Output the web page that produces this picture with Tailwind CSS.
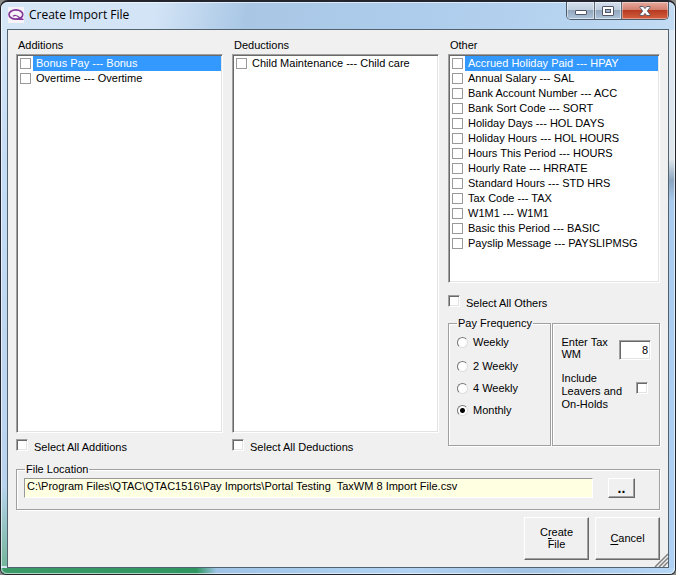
<!DOCTYPE html>
<html lang="en">
<head>
    <meta charset="UTF-8">
    <meta name="viewport" content="width=device-width, initial-scale=1.0">
    <title>Create Import File</title>
    <script src="https://cdn.jsdelivr.net/npm/@tailwindcss/browser@4"></script>
</head>
<body class="bg-[#8a8a86] font-['Liberation_Sans',Arial,sans-serif] text-[11px] leading-[14px] text-black">

    <div class="relative flex flex-col min-h-screen px-1.5 pb-1.5 border border-t-2 border-[#23252e] rounded-t-lg rounded-b-md bg-[linear-gradient(100deg,#d5e6f7_0%,#d3e4f6_20%,#a9c7e5_32%,#aecdec_55%,#b7d4f0_75%,#cfe3f7_100%)]">
        <!-- window edges -->
        <div class="absolute inset-x-0 bottom-0 h-1.5 rounded-b-md bg-[linear-gradient(90deg,#3b9a68_0%,#2f9560_29%,#9fc4e6_32%,#b1d2f2_60%,#a3c3e2_78%,#b5d6f5_100%)]"></div>
        <div class="absolute top-7 bottom-2 left-0 w-1.5 bg-[linear-gradient(180deg,#d5e6f7_0%,#c4dcf5_25%,#b9d3ee_85%,#74b59b_100%)]"></div>
        <div class="absolute top-7 bottom-1.5 right-0 w-1.5 bg-[linear-gradient(180deg,#dce8f4_0%,#dfe6ec_24%,#8ba5bf_28%,#a9cbee_32%,#aed0f2_100%)]"></div>
        <div class="absolute inset-0 rounded-t-md rounded-b-md border border-white/60 pointer-events-none"></div>

        <header class="flex items-start h-[27px]">
            <svg class="w-4 h-4 mt-[5px] ml-px" viewBox="0 0 16 16" aria-hidden="true">
                <rect width="16" height="16" fill="#f8f4fa"/>
                <ellipse cx="7.900" cy="7.500" rx="6.900" ry="4.700" fill="none" stroke="#85399a" stroke-width="1.700"/>
                <path d="M5 9.300c1.500-1.200 4-1 5.200.4 1 1.300 2.400 2.600 5.300 2.700H7" fill="none" stroke="#85399a" stroke-width="1.300"/>
            </svg>
            <h1 class="flex-1 ml-[5px] mt-[4px] font-['Open_Sans','Noto_Sans',sans-serif] text-[12px] leading-[18px]">Create Import File</h1>
            <div class="relative flex h-[18px] border border-t-0 border-[#4d5a6b] rounded-b-[5px] overflow-hidden divide-x divide-[#5b6878]">
                <button type="button" aria-label="Minimize" class="w-7 flex justify-center items-center shadow-[inset_0_0_0_1px_#ffffff80] bg-[linear-gradient(180deg,#d3dfec_0%,#c1cfde_45%,#93a7bd_50%,#adc4da_100%)]">
                    <svg class="w-3 h-3" viewBox="0 0 12 12"><rect x=".5" y="5.500" width="11" height="4" rx=".5" fill="#fff" stroke="#535666"/></svg>
                </button>
                <button type="button" aria-label="Maximize" class="w-[27px] flex justify-center items-center shadow-[inset_0_0_0_1px_#ffffff80] bg-[linear-gradient(180deg,#d3dfec_0%,#c1cfde_45%,#93a7bd_50%,#adc4da_100%)]">
                    <svg class="w-3 h-3" viewBox="0 0 12 12"><rect x=".5" y="1.500" width="11" height="9" rx=".5" fill="#fff" stroke="#535666"/><rect x="3.500" y="4.500" width="5" height="3" fill="#9db4ca" stroke="#535666"/></svg>
                </button>
                <button type="button" aria-label="Close" class="w-[46px] flex justify-center items-center shadow-[inset_0_0_0_1px_#ffffff60] bg-[linear-gradient(180deg,#e6aa9d_0%,#d4806f_45%,#b83a22_50%,#d5603f_100%)]">
                    <svg class="w-3 h-3" viewBox="0 0 12 12"><path d="M1 1.500h3.400L6 3.600l1.600-2.100H11v1L8.300 6l2.700 3.500v1H7.600L6 8.400l-1.600 2.100H1v-1L3.700 6 1 2.500z" fill="#fff" stroke="#535666" stroke-width=".9"/></svg>
                </button>
            </div>
        </header>

        <form class="relative flex-1 flex flex-col p-2 pb-[7px] bg-[#f0f0f0] border border-[#53626f]">
            <div class="flex-1 grid grid-cols-[207fr_207fr_212fr] gap-x-[9px]">
                <section class="flex flex-col">
                    <h2 class="mb-0.5 pl-0.5">Additions</h2>
                    <ul class="flex-1 p-px bg-white border border-t-[#a0a0a0] border-l-[#a0a0a0] border-r-white border-b-white shadow-[inset_1px_1px_0_#696969,inset_-1px_-1px_0_#e3e3e3]">
                        <li><label class="flex items-center h-[15px] pl-0.5 gap-0.5"><input type="checkbox" class="appearance-none w-[11px] h-[11px] border border-[#999] bg-white checked:bg-[#999]"><span class="flex-1 pl-[3px] leading-[15px] bg-[#3399ff] text-white">Bonus Pay --- Bonus</span></label></li>
                        <li><label class="flex items-center h-[15px] pl-0.5 gap-0.5"><input type="checkbox" class="appearance-none w-[11px] h-[11px] border border-[#999] bg-white checked:bg-[#999]"><span class="flex-1 pl-[3px] leading-[15px]">Overtime --- Overtime</span></label></li>
                    </ul>
                    <label class="flex items-start mt-1.5 gap-1.5"><input type="checkbox" class="appearance-none w-3 h-3 border border-t-[#a0a0a0] border-l-[#a0a0a0] border-r-white border-b-white shadow-[inset_1px_1px_0_#696969,inset_-1px_-1px_0_#e3e3e3] bg-white checked:bg-[#777]"><span class="mt-px">Select All Additions</span></label>
                </section>

                <section class="flex flex-col">
                    <h2 class="mb-0.5 pl-0.5">Deductions</h2>
                    <ul class="flex-1 p-px bg-white border border-t-[#a0a0a0] border-l-[#a0a0a0] border-r-white border-b-white shadow-[inset_1px_1px_0_#696969,inset_-1px_-1px_0_#e3e3e3]">
                        <li><label class="flex items-center h-[15px] pl-0.5 gap-0.5"><input type="checkbox" class="appearance-none w-[11px] h-[11px] border border-[#999] bg-white checked:bg-[#999]"><span class="flex-1 pl-[3px] leading-[15px]">Child Maintenance --- Child care</span></label></li>
                    </ul>
                    <label class="flex items-start mt-1.5 gap-1.5"><input type="checkbox" class="appearance-none w-3 h-3 border border-t-[#a0a0a0] border-l-[#a0a0a0] border-r-white border-b-white shadow-[inset_1px_1px_0_#696969,inset_-1px_-1px_0_#e3e3e3] bg-white checked:bg-[#777]"><span class="mt-px">Select All Deductions</span></label>
                </section>

                <section class="flex flex-col">
                    <h2 class="mb-0.5 pl-0.5">Other</h2>
                    <ul class="flex-1 p-px bg-white border border-t-[#a0a0a0] border-l-[#a0a0a0] border-r-white border-b-white shadow-[inset_1px_1px_0_#696969,inset_-1px_-1px_0_#e3e3e3]">
                        <li><label class="flex items-center h-[15px] pl-0.5 gap-0.5"><input type="checkbox" class="appearance-none w-[11px] h-[11px] border border-[#999] bg-white checked:bg-[#999]"><span class="flex-1 pl-[3px] leading-[15px] bg-[#3399ff] text-white">Accrued Holiday Paid --- HPAY</span></label></li>
                        <li><label class="flex items-center h-[15px] pl-0.5 gap-0.5"><input type="checkbox" class="appearance-none w-[11px] h-[11px] border border-[#999] bg-white checked:bg-[#999]"><span class="flex-1 pl-[3px] leading-[15px]">Annual Salary --- SAL</span></label></li>
                        <li><label class="flex items-center h-[15px] pl-0.5 gap-0.5"><input type="checkbox" class="appearance-none w-[11px] h-[11px] border border-[#999] bg-white checked:bg-[#999]"><span class="flex-1 pl-[3px] leading-[15px]">Bank Account Number --- ACC</span></label></li>
                        <li><label class="flex items-center h-[15px] pl-0.5 gap-0.5"><input type="checkbox" class="appearance-none w-[11px] h-[11px] border border-[#999] bg-white checked:bg-[#999]"><span class="flex-1 pl-[3px] leading-[15px]">Bank Sort Code --- SORT</span></label></li>
                        <li><label class="flex items-center h-[15px] pl-0.5 gap-0.5"><input type="checkbox" class="appearance-none w-[11px] h-[11px] border border-[#999] bg-white checked:bg-[#999]"><span class="flex-1 pl-[3px] leading-[15px]">Holiday Days --- HOL DAYS</span></label></li>
                        <li><label class="flex items-center h-[15px] pl-0.5 gap-0.5"><input type="checkbox" class="appearance-none w-[11px] h-[11px] border border-[#999] bg-white checked:bg-[#999]"><span class="flex-1 pl-[3px] leading-[15px]">Holiday Hours --- HOL HOURS</span></label></li>
                        <li><label class="flex items-center h-[15px] pl-0.5 gap-0.5"><input type="checkbox" class="appearance-none w-[11px] h-[11px] border border-[#999] bg-white checked:bg-[#999]"><span class="flex-1 pl-[3px] leading-[15px]">Hours This Period --- HOURS</span></label></li>
                        <li><label class="flex items-center h-[15px] pl-0.5 gap-0.5"><input type="checkbox" class="appearance-none w-[11px] h-[11px] border border-[#999] bg-white checked:bg-[#999]"><span class="flex-1 pl-[3px] leading-[15px]">Hourly Rate --- HRRATE</span></label></li>
                        <li><label class="flex items-center h-[15px] pl-0.5 gap-0.5"><input type="checkbox" class="appearance-none w-[11px] h-[11px] border border-[#999] bg-white checked:bg-[#999]"><span class="flex-1 pl-[3px] leading-[15px]">Standard Hours --- STD HRS</span></label></li>
                        <li><label class="flex items-center h-[15px] pl-0.5 gap-0.5"><input type="checkbox" class="appearance-none w-[11px] h-[11px] border border-[#999] bg-white checked:bg-[#999]"><span class="flex-1 pl-[3px] leading-[15px]">Tax Code --- TAX</span></label></li>
                        <li><label class="flex items-center h-[15px] pl-0.5 gap-0.5"><input type="checkbox" class="appearance-none w-[11px] h-[11px] border border-[#999] bg-white checked:bg-[#999]"><span class="flex-1 pl-[3px] leading-[15px]">W1M1 --- W1M1</span></label></li>
                        <li><label class="flex items-center h-[15px] pl-0.5 gap-0.5"><input type="checkbox" class="appearance-none w-[11px] h-[11px] border border-[#999] bg-white checked:bg-[#999]"><span class="flex-1 pl-[3px] leading-[15px]">Basic this Period --- BASIC</span></label></li>
                        <li><label class="flex items-center h-[15px] pl-0.5 gap-0.5"><input type="checkbox" class="appearance-none w-[11px] h-[11px] border border-[#999] bg-white checked:bg-[#999]"><span class="flex-1 pl-[3px] leading-[15px]">Payslip Message --- PAYSLIPMSG</span></label></li>
                    </ul>
                    <label class="flex items-start mt-3 gap-1.5"><input type="checkbox" class="appearance-none w-3 h-3 border border-t-[#a0a0a0] border-l-[#a0a0a0] border-r-white border-b-white shadow-[inset_1px_1px_0_#696969,inset_-1px_-1px_0_#e3e3e3] bg-white checked:bg-[#777]"><span class="mt-px">Select All Others</span></label>

                    <div class="grid grid-cols-[103fr_107fr] items-end gap-px mt-1.5 mb-2">
                        <fieldset class="h-[130px] pl-2 border border-[#a0a0a0] shadow-[1px_1px_0_#fff,inset_1px_1px_0_#fff]">
                            <legend class="px-px leading-[14px]">Pay Frequency</legend>
                            <label class="flex items-center h-6 gap-[5px]"><input type="radio" name="freq" class="appearance-none w-[11px] h-[11px] rounded-full border border-t-[#777] border-l-[#777] border-r-[#ddd] border-b-[#ddd] bg-white checked:bg-[radial-gradient(circle,#000_2px,#fff_3px)]">Weekly</label>
                            <label class="flex items-center h-6 gap-[5px]"><input type="radio" name="freq" class="appearance-none w-[11px] h-[11px] rounded-full border border-t-[#777] border-l-[#777] border-r-[#ddd] border-b-[#ddd] bg-white checked:bg-[radial-gradient(circle,#000_2px,#fff_3px)]">2 Weekly</label>
                            <label class="flex items-center h-5 gap-[5px]"><input type="radio" name="freq" class="appearance-none w-[11px] h-[11px] rounded-full border border-t-[#777] border-l-[#777] border-r-[#ddd] border-b-[#ddd] bg-white checked:bg-[radial-gradient(circle,#000_2px,#fff_3px)]">4 Weekly</label>
                            <label class="flex items-center h-6 gap-[5px]"><input type="radio" name="freq" checked class="appearance-none w-[11px] h-[11px] rounded-full border border-t-[#777] border-l-[#777] border-r-[#ddd] border-b-[#ddd] bg-white checked:bg-[radial-gradient(circle,#000_2px,#fff_3px)]">Monthly</label>
                        </fieldset>
                        <div class="h-[123px] pt-3 px-2 border border-[#a0a0a0] shadow-[1px_1px_0_#fff,inset_1px_1px_0_#fff]">
                            <div class="flex justify-between items-center mb-3">
                                <label for="taxwm" class="leading-3">Enter Tax<br>WM</label>
                                <input id="taxwm" type="text" value="8" class="w-8 h-5 mt-1 pr-0.5 text-right bg-white border border-t-[#a0a0a0] border-l-[#a0a0a0] border-r-white border-b-white shadow-[inset_1px_1px_0_#696969,inset_-1px_-1px_0_#e3e3e3]">
                            </div>
                            <div class="flex justify-between items-start">
                                <label for="leavers" class="leading-[13px]">Include<br>Leavers and<br>On-Holds</label>
                                <input id="leavers" type="checkbox" class="appearance-none w-3 h-3 mt-2.5 mr-[3px] border border-t-[#a0a0a0] border-l-[#a0a0a0] border-r-white border-b-white shadow-[inset_1px_1px_0_#696969,inset_-1px_-1px_0_#e3e3e3] bg-white checked:bg-[#777]">
                            </div>
                        </div>
                    </div>
                </section>
            </div>

            <fieldset class="mt-2 h-12 pl-[7px] pr-6 flex items-start border border-[#a0a0a0] shadow-[1px_1px_0_#fff,inset_1px_1px_0_#fff]">
                <legend class="ml-px px-px leading-[14px]">File Location</legend>
                <input type="text" aria-label="File Location" value="C:\Program Files\QTAC\QTAC1516\Pay Imports\Portal Testing  TaxWM 8 Import File.csv" class="flex-1 h-5 mt-0.5 pl-0.5 pb-1 bg-[#ffffe1] border border-t-[#999] border-l-[#999] border-r-white border-b-white">
                <button type="button" class="w-[27px] h-5 mt-0.5 ml-[15px] font-bold text-[14px] leading-3 bg-[#f0f0f0] border border-t-white border-l-white border-r-[#696969] border-b-[#696969] shadow-[inset_-1px_-1px_0_#a0a0a0]">..</button>
            </fieldset>

            <div class="flex justify-end gap-1.5 mt-[7px]">
                <button type="submit" class="w-[65px] h-[43px] pb-0.5 leading-3 bg-[#f0f0f0] border border-t-white border-l-white border-r-[#696969] border-b-[#696969] shadow-[inset_-1px_-1px_0_#a0a0a0]">C<u class="underline-offset-2">r</u>eate<br>File</button>
                <button type="button" class="w-[65px] h-[43px] pb-0.5 leading-3 bg-[#f0f0f0] border border-t-white border-l-white border-r-[#696969] border-b-[#696969] shadow-[inset_-1px_-1px_0_#a0a0a0]"><u class="underline-offset-2">C</u>ancel</button>
            </div>

            <svg class="absolute right-0 bottom-0 w-3.5 h-3.5" viewBox="0 0 14 14" aria-hidden="true">
                <path d="M1 14L14 1M5 14l9-9M9 14l5-5" stroke="#808080" stroke-width="1.500"/>
            </svg>
        </form>
    </div>

    <script>
        document.querySelector("form").addEventListener("submit", function(event) {
            event.preventDefault();
        });
    </script>
</body>
</html>
